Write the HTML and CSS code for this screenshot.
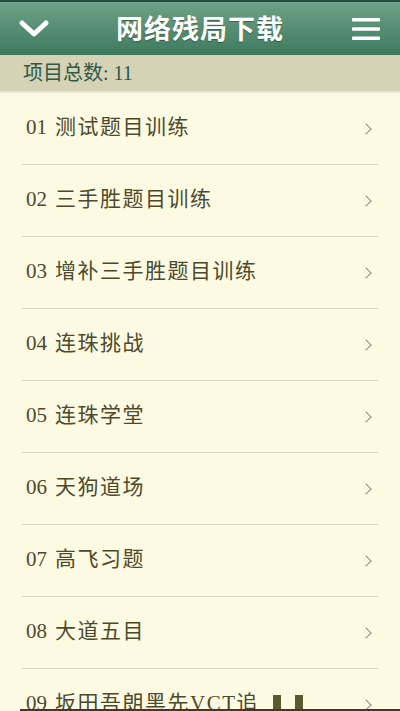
FILE: index.html
```html
<!DOCTYPE html>
<html lang="zh">
<head>
<meta charset="utf-8">
<title>网络残局下载</title>
<link rel="stylesheet" href="styles.css">
</head>
<body>
<div class="page">
  <header class="topbar">
    <span class="icon-btn">
      <svg width="32" height="22" viewBox="0 0 32 22"><path d="M4 5 L16 16 L28 5" fill="none" stroke="#fff" stroke-width="5" stroke-linecap="round" stroke-linejoin="round"/></svg>
    </span>
    <h1 class="title">网络残局下载</h1>
    <span class="icon-btn">
      <svg width="30" height="24" viewBox="0 0 30 24"><rect x="1" y="1" width="28" height="3.5" rx="1" fill="#fff"/><rect x="1" y="10.2" width="28" height="3.5" rx="1" fill="#fff"/><rect x="1" y="19.5" width="28" height="3.5" rx="1" fill="#fff"/></svg>
    </span>
  </header>
  <div class="subbar">项目总数: 11</div>
  <ul class="list">
    <li class="row"><span class="label"><span class="num">01</span>测试题目训练</span><span class="chev"></span></li>
    <li class="row"><span class="label"><span class="num">02</span>三手胜题目训练</span><span class="chev"></span></li>
    <li class="row"><span class="label"><span class="num">03</span>增补三手胜题目训练</span><span class="chev"></span></li>
    <li class="row"><span class="label"><span class="num">04</span>连珠挑战</span><span class="chev"></span></li>
    <li class="row"><span class="label"><span class="num">05</span>连珠学堂</span><span class="chev"></span></li>
    <li class="row"><span class="label"><span class="num">06</span>天狗道场</span><span class="chev"></span></li>
    <li class="row"><span class="label"><span class="num">07</span>高飞习题</span><span class="chev"></span></li>
    <li class="row"><span class="label"><span class="num">08</span>大道五目</span><span class="chev"></span></li>
    <li class="row"><span class="label"><span class="num">09</span>坂田吾朗黑先VCT追<i class="blk"></i><i class="blk"></i></span><span class="chev"></span></li>
  </ul>
  <div class="bottomline"></div>
</div>
</body>
</html>
```
FILE: styles.css
```css
html, body {
  margin: 0;
  padding: 0;
  height: 100%;
  overflow: hidden;
  background: #fdfae4;
}
.page {
  width: 400px;
  height: 711px;
  overflow: hidden;
  font-family: "Liberation Serif", "Noto Sans CJK SC", serif;
  background: #fdfae4;
}
.topbar {
  height: 53px;
  border-top: 2px solid #244f3b;
  background: linear-gradient(#6fa288, #3e7a5e);
  display: flex;
  align-items: center;
  justify-content: space-between;
  padding: 0 17px 0 17px;
  box-sizing: content-box;
}
.icon-btn {
  display: flex;
  align-items: center;
  width: 34px;
  justify-content: center;
}
.title {
  margin: 0;
  color: #fff;
  font-size: 27px;
  font-weight: 700;
  font-family: "Noto Sans CJK SC", sans-serif;
  letter-spacing: 1px;
  text-shadow: 0 1px 1px rgba(0,0,0,0.35);
  margin-top: -2px;
}
.subbar {
  height: 36px;
  line-height: 36px;
  background: #d5d2b5;
  border-bottom: 2px solid #ece9d0;
  color: #305a47;
  font-size: 20px;
  padding-left: 23px;
}
.list {
  list-style: none;
  margin: 0;
  padding: 0 22px;
}
.row {
  height: 71px;
  border-bottom: 1px solid #d8d4bd;
  display: flex;
  align-items: center;
  justify-content: space-between;
}
.label {
  display: block;
  color: #4c4a2a;
  font-size: 21px;
  line-height: 28px;
  letter-spacing: 1.5px;
  padding-left: 4px;
  padding-bottom: 4px;
  white-space: nowrap;
}
.num {
  letter-spacing: 0;
  margin-right: 8px;
}
.blk {
  display: inline-block;
  width: 8px;
  height: 18px;
  background: #5a5a2e;
  margin-left: 14px;
  vertical-align: -3px;
}
.blk:first-child { margin-left: 8px; }
.chev {
  width: 7px;
  height: 7px;
  border-top: 1.5px solid #8d8b7a;
  border-right: 1.5px solid #8d8b7a;
  transform: rotate(45deg);
  margin-right: 8px;
}
.bottomline {
  position: fixed;
  left: 20px;
  right: 0;
  bottom: 0;
  height: 2px;
  background: #3b3a2c;
}
```
